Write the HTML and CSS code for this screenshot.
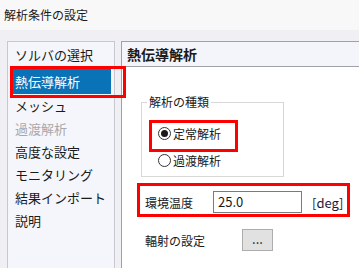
FILE: index.html
```html
<!DOCTYPE html>
<html lang="ja">
<head>
    <meta charset="UTF-8">
    <title>解析条件の設定</title>
    <link rel="stylesheet" href="styles.css">
</head>
<body>
    <div class="titlebar">解析条件の設定</div>
    <div class="main">
        <div class="sidebar">
            <div class="item">ソルバの選択</div>
            <div class="item selected">熱伝導解析</div>
            <div class="item">メッシュ</div>
            <div class="item disabled">過渡解析</div>
            <div class="item">高度な設定</div>
            <div class="item">モニタリング</div>
            <div class="item">結果インポート</div>
            <div class="item">説明</div>
        </div>
        <div class="panel">
            <div class="panel-header">熱伝導解析</div>
            <div class="panel-body">
                <fieldset class="group">
                    <legend>解析の種類</legend>
                    <div class="radio-row"><span class="radio checked"></span>定常解析</div>
                    <div class="radio-row"><span class="radio"></span>過渡解析</div>
                </fieldset>
                <div class="field-row">
                    <span class="label">環境温度</span>
                    <span class="input">25.0</span>
                    <span class="unit">[deg]</span>
                </div>
                <div class="field-row second">
                    <span class="label wide">輻射の設定</span>
                    <span class="btn">...</span>
                </div>
            </div>
        </div>
    </div>

    <div class="mark mark-list"></div>
    <div class="mark mark-radio"></div>
    <div class="mark mark-temp"></div>
</body>
</html>
```

FILE: styles.css
```css
body {
    margin: 0;
    width: 359px;
    height: 268px;
    overflow: hidden;
    position: relative;
    background-color: #f0eff3;
    font-family: "Noto Sans CJK JP", "Noto Sans", sans-serif;
    color: #1a1a1a;
}

.titlebar {
    height: 30px;
    line-height: 30px;
    padding-left: 4px;
    font-size: 12px;
    background-color: #f8f8f8;
}

.main {
    display: flex;
    gap: 6px;
    padding: 11px 0 0 7px;
    height: 227px;
}

.sidebar {
    flex: none;
    width: 106px;
    border: 1px solid #c8c8d0;
    border-bottom: none;
    background-color: #f5f6fb;
    padding-top: 1px;
    font-size: 13px;
}

.item {
    height: 23px;
    line-height: 23px;
    padding-left: 7px;
    white-space: nowrap;
}

.item.selected {
    height: 25px;
    line-height: 25px;
    margin: 3px 3px 0 3px;
    padding-left: 4px;
    background-color: #0a72b6;
    color: #fff;
}

.item.disabled {
    color: #a8a8ac;
}

.panel {
    flex: 1;
    min-width: 0;
    border-left: 1px solid #a0a0a8;
    border-top: 1px solid #a0a0a8;
    background-color: #fff;
}

.panel-header {
    height: 24px;
    line-height: 24px;
    padding-left: 5px;
    font-size: 14px;
    font-weight: bold;
    background-color: #f4f5fb;
    border-bottom: 1px solid #a0a0a8;
}

.panel-body {
    font-size: 12px;
}

.group {
    width: 136px;
    margin: 27px 0 0 19px;
    padding: 0 0 5px 5px;
    border: 1px solid #d8d8d8;
}

.group legend {
    padding: 0 2px;
    line-height: 16px;
}

.radio-row {
    display: flex;
    align-items: center;
    gap: 2px;
    height: 22px;
    margin-top: 5px;
    padding-left: 11px;
}

.radio-row:first-of-type {
    margin-top: 12px;
}

.radio {
    width: 11px;
    height: 11px;
    border: 1px solid #333;
    border-radius: 50%;
    display: flex;
    align-items: center;
    justify-content: center;
}

.radio.checked::after {
    content: "";
    width: 7px;
    height: 7px;
    border-radius: 50%;
    background-color: #1a1a1a;
}

.field-row {
    display: flex;
    align-items: center;
    height: 22px;
    margin-top: 14px;
    padding-left: 23px;
}

.field-row.second {
    margin-top: 16px;
}

.label {
    width: 68px;
}

.label.wide {
    width: 97px;
}

.input {
    box-sizing: border-box;
    width: 89px;
    height: 22px;
    line-height: 20px;
    padding-left: 4px;
    border: 1px solid #7a7a7a;
    font-size: 13px;
}

.unit {
    margin-left: 10px;
    font-size: 13px;
    color: #1a1a3a;
}

.btn {
    box-sizing: border-box;
    width: 31px;
    height: 22px;
    line-height: 18px;
    text-align: center;
    background-color: #e1e1e1;
    border: 1px solid #adadad;
    font-size: 13px;
}

.mark {
    position: absolute;
    border: 3px solid #f00;
    box-sizing: border-box;
}

.mark-list {
    left: 10px;
    top: 66px;
    width: 116px;
    height: 32px;
}

.mark-radio {
    left: 149px;
    top: 120px;
    width: 89px;
    height: 32px;
}

.mark-temp {
    left: 137px;
    top: 183px;
    width: 213px;
    height: 34px;
}
```
